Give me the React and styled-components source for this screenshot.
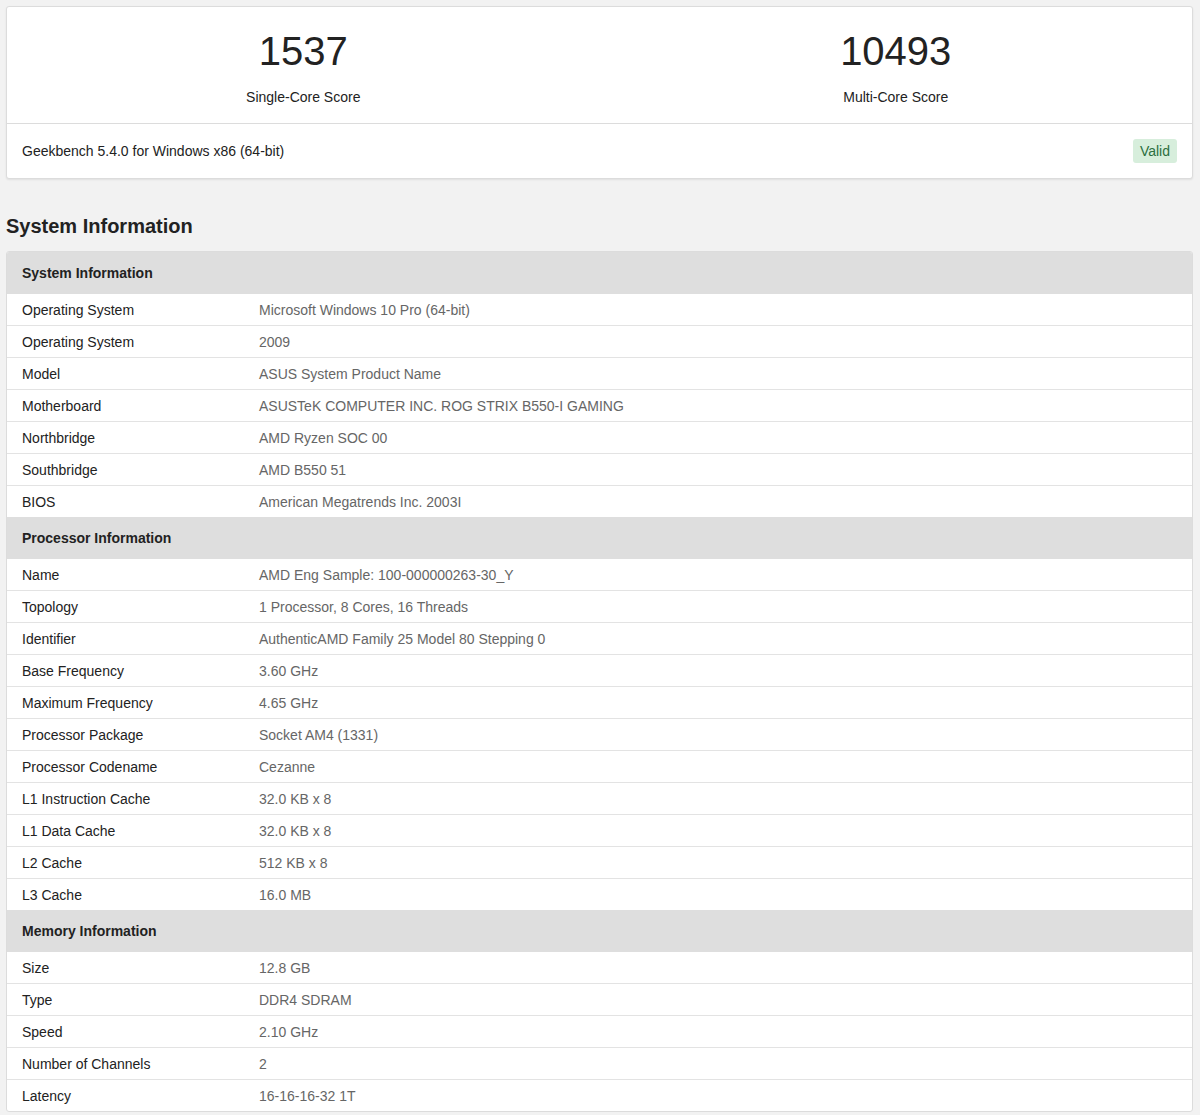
import React from "react";
import styled, { createGlobalStyle } from "styled-components";

const sections = [
  {
    title: "System Information",
    rows: [
      ["Operating System", "Microsoft Windows 10 Pro (64-bit)"],
      ["Operating System", "2009"],
      ["Model", "ASUS System Product Name"],
      ["Motherboard", "ASUSTeK COMPUTER INC. ROG STRIX B550-I GAMING"],
      ["Northbridge", "AMD Ryzen SOC 00"],
      ["Southbridge", "AMD B550 51"],
      ["BIOS", "American Megatrends Inc. 2003I"],
    ],
  },
  {
    title: "Processor Information",
    rows: [
      ["Name", "AMD Eng Sample: 100-000000263-30_Y"],
      ["Topology", "1 Processor, 8 Cores, 16 Threads"],
      ["Identifier", "AuthenticAMD Family 25 Model 80 Stepping 0"],
      ["Base Frequency", "3.60 GHz"],
      ["Maximum Frequency", "4.65 GHz"],
      ["Processor Package", "Socket AM4 (1331)"],
      ["Processor Codename", "Cezanne"],
      ["L1 Instruction Cache", "32.0 KB x 8"],
      ["L1 Data Cache", "32.0 KB x 8"],
      ["L2 Cache", "512 KB x 8"],
      ["L3 Cache", "16.0 MB"],
    ],
  },
  {
    title: "Memory Information",
    rows: [
      ["Size", "12.8 GB"],
      ["Type", "DDR4 SDRAM"],
      ["Speed", "2.10 GHz"],
      ["Number of Channels", "2"],
      ["Latency", "16-16-16-32 1T"],
    ],
  },
];

export default function App() {
  return (
    <Page>
      <GlobalStyle />
      <Card>
        <Scores>
          <Score>
            <ScoreValue>1537</ScoreValue>
            <ScoreLabel>Single-Core Score</ScoreLabel>
          </Score>
          <Score>
            <ScoreValue>10493</ScoreValue>
            <ScoreLabel>Multi-Core Score</ScoreLabel>
          </Score>
        </Scores>
        <CardFooter>
          <span>Geekbench 5.4.0 for Windows x86 (64-bit)</span>
          <Badge>Valid</Badge>
        </CardFooter>
      </Card>
      <Heading>System Information</Heading>
      <Table>
        {sections.map((s) => (
          <React.Fragment key={s.title}>
            <SectionHead>{s.title}</SectionHead>
            {s.rows.map(([k, v], i) => (
              <Row key={i}>
                <Label>{k}</Label>
                <Value>{v}</Value>
              </Row>
            ))}
          </React.Fragment>
        ))}
      </Table>
    </Page>
  );
}

const GlobalStyle = createGlobalStyle`
  body {
    margin: 0;
    background: #f2f2f2;
    font-family: "Liberation Sans", Arial, sans-serif;
    font-size: 14px;
    color: #222;
  }
`;

const Page = styled.div`
  padding: 6px 7px 0 6px;
`;

const Card = styled.div`
  background: #fff;
  border: 1px solid #dcdcdc;
  border-radius: 3px;
  box-shadow: 0 1px 2px rgba(0, 0, 0, 0.08);
`;

const Scores = styled.div`
  display: grid;
  grid-template-columns: 1fr 1fr;
  height: 116px;
  border-bottom: 1px solid #dcdcdc;
`;

const Score = styled.div`
  display: flex;
  flex-direction: column;
  align-items: center;
  padding-top: 22px;
`;

const ScoreValue = styled.div`
  font-size: 40px;
  line-height: 44px;
  color: #222;
`;

const ScoreLabel = styled.div`
  margin-top: 16px;
  font-size: 14px;
`;

const CardFooter = styled.div`
  display: flex;
  align-items: center;
  justify-content: space-between;
  height: 54px;
  padding: 0 15px;
`;

const Badge = styled.span`
  background: #d7eedc;
  color: #2c6e3f;
  border-radius: 3px;
  padding: 4px 7px;
`;

const Heading = styled.h2`
  margin: 36px 0 13px;
  font-size: 20px;
  font-weight: bold;
  color: #222;
`;

const Table = styled.div`
  background: #fff;
  border: 1px solid #dcdcdc;
  border-radius: 3px;
  overflow: hidden;
`;

const SectionHead = styled.div`
  background: #dedede;
  font-weight: bold;
  height: 42px;
  display: flex;
  align-items: center;
  padding: 0 15px;
`;

const Row = styled.div`
  display: grid;
  grid-template-columns: 237px 1fr;
  height: 31px;
  align-items: center;
  padding: 0 15px;
  & + & {
    border-top: 1px solid #e3e3e3;
  }
`;

const Label = styled.div`
  color: #222;
`;

const Value = styled.div`
  color: #666;
`;
